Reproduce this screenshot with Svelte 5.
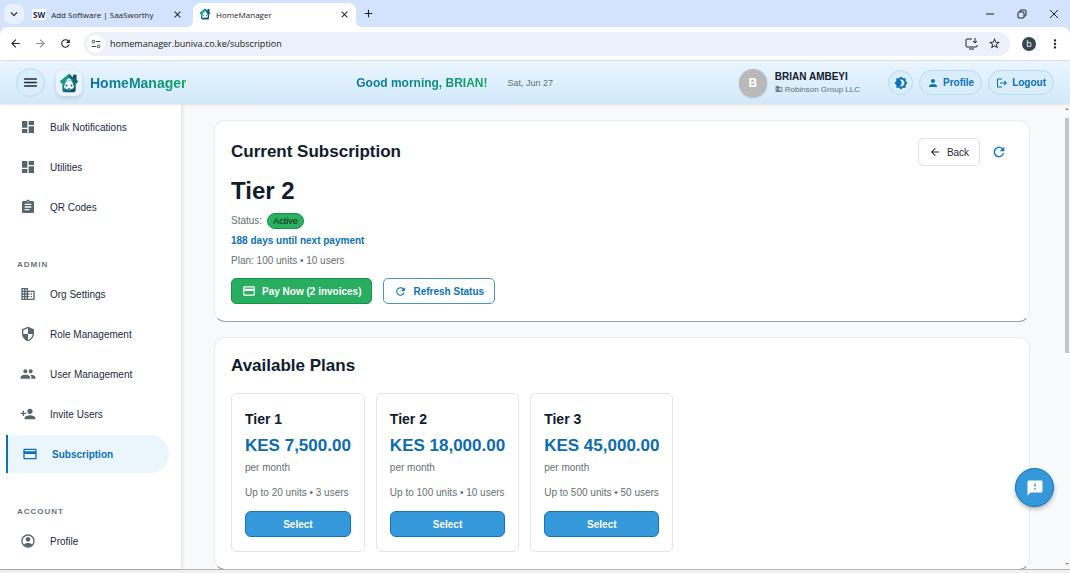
<script>
  const paths = {
    dashboard: 'M3 13h8V3H3v10zm0 8h8v-6H3v6zm10 0h8V11h-8v10zm0-18v6h8V3h-8z',
    assignment: 'M19 3h-4.18C14.4 1.84 13.3 1 12 1c-1.3 0-2.4.84-2.82 2H5c-1.1 0-2 .9-2 2v14c0 1.1.9 2 2 2h14c1.1 0 2-.9 2-2V5c0-1.1-.9-2-2-2zm-7 0c.55 0 1 .45 1 1s-.45 1-1 1-1-.45-1-1 .45-1 1-1zm2 14H7v-2h7v2zm3-4H7v-2h10v2zm0-4H7V7h10v2z',
    business: 'M12 7V3H2v18h20V7H12zM6 19H4v-2h2v2zm0-4H4v-2h2v2zm0-4H4V9h2v2zm0-4H4V5h2v2zm4 12H8v-2h2v2zm0-4H8v-2h2v2zm0-4H8V9h2v2zm0-4H8V5h2v2zm10 12h-8v-2h2v-2h-2v-2h2v-2h-2V9h8v10zm-2-8h-2v2h2v-2zm0 4h-2v2h2v-2z',
    security: 'M12 1L3 5v6c0 5.55 3.84 10.74 9 12 5.16-1.26 9-6.45 9-12V5l-9-4zm0 10.99h7c-.53 4.12-3.28 7.79-7 8.94V12H5V6.3l7-3.11v8.8z',
    people: 'M16 11c1.66 0 2.99-1.34 2.99-3S17.66 5 16 5c-1.66 0-3 1.34-3 3s1.34 3 3 3zm-8 0c1.66 0 2.99-1.34 2.99-3S9.66 5 8 5C6.34 5 5 6.34 5 8s1.34 3 3 3zm0 2c-2.33 0-7 1.17-7 3.5V19h14v-2.5c0-2.33-4.67-3.5-7-3.5zm8 0c-.29 0-.62.02-.97.05 1.16.84 1.97 1.97 1.97 3.45V19h6v-2.5c0-2.33-4.67-3.5-7-3.5z',
    personAdd: 'M15 12c2.21 0 4-1.79 4-4s-1.79-4-4-4-4 1.79-4 4 1.79 4 4 4zm-9-2V7H4v3H1v2h3v3h2v-3h3v-2H6zm9 4c-2.67 0-8 1.34-8 4v2h16v-2c0-2.66-5.33-4-8-4z',
    card: 'M20 4H4c-1.11 0-1.99.89-1.99 2L2 18c0 1.11.89 2 2 2h16c1.11 0 2-.89 2-2V6c0-1.11-.89-2-2-2zm0 14H4v-6h16v6zm0-10H4V6h16v2z',
    account: 'M12 2C6.48 2 2 6.48 2 12s4.48 10 10 10 10-4.48 10-10S17.52 2 12 2zM12 20c-4.42 0-8-3.58-8-8s3.58-8 8-8 8 3.580 8 8c0 1.950-.7 3.730-1.860 5.120C16.450 15.800 14.320 15 12 15s-4.450.8-6.140 2.120L7.350 18.500A8 8 0 0 0 12 20zM12 6c-1.930 0-3.500 1.570-3.500 3.500S10.070 13 12 13s3.500-1.570 3.500-3.500S13.930 6 12 6z',
    refresh: 'M17.65 6.35C16.2 4.9 14.21 4 12 4c-4.42 0-7.99 3.58-7.99 8s3.57 8 7.99 8c3.73 0 6.84-2.55 7.73-6h-2.08c-.82 2.33-3.04 4-5.65 4-3.31 0-6-2.69-6-6s2.69-6 6-6c1.66 0 3.14.69 4.22 1.78L13 11h7V4l-2.35 2.35z',
    feedback: 'M20 2H4c-1.1 0-1.99.9-1.99 2L2 22l4-4h14c1.1 0 2-.9 2-2V4c0-1.1-.9-2-2-2zm-7 12h-2v-2h2v2zm0-4h-2V6h2v4z',
    brightness: 'M20 8.69V4h-4.69L12 .69 8.69 4H4v4.69L.69 12 4 15.31V20h4.69L12 23.31 15.31 20H20v-4.69L23.31 12 20 8.69zM12 18c-.89 0-1.74-.2-2.5-.55C11.56 16.5 13 14.42 13 12s-1.44-4.5-3.5-5.45C10.26 6.2 11.11 6 12 6c3.31 0 6 2.69 6 6s-2.69 6-6 6z',
    person: 'M12 12c2.21 0 4-1.79 4-4s-1.79-4-4-4-4 1.79-4 4 1.79 4 4 4zm0 2c-2.67 0-8 1.34-8 4v2h16v-2c0-2.66-5.33-4-8-4z',
    logout: 'M17 7l-1.41 1.41L18.17 11H8v2h10.17l-2.58 2.58L17 17l5-5zM4 5h8V3H4c-1.1 0-2 .9-2 2v14c0 1.1.9 2 2 2h8v-2H4V5z',
    back: 'M20 11H7.83l5.59-5.59L12 4l-8 8 8 8 1.41-1.41L7.83 13H20v-2z',
    forward: 'M12 4l-1.41 1.41L16.17 11H4v2h12.17l-5.58 5.59L12 20l8-8-8-8z',
    menu: 'M3 18h18v-2H3v2zm0-5h18v-2H3v2zm0-7v2h18V6H3z',
    close: 'M19 6.41L17.59 5 12 10.59 6.41 5 5 6.41 10.59 12 5 17.59 6.41 19 12 13.41 17.59 19 19 17.59 13.41 12 19 6.41z',
    add: 'M19 13h-6v6h-2v-6H5v-2h6V5h2v6h6v2z',
    chevron: 'M7.41 8.59L12 13.17l4.59-4.58L18 10l-6 6-6-6 1.41-1.41z',
    star: 'M22 9.24l-7.19-.62L12 2 9.19 8.63 2 9.24l5.46 4.73L5.82 21 12 17.27 18.18 21l-1.63-7.03L22 9.24zM12 15.4l-3.76 2.27 1-4.28-3.32-2.88 4.38-.38L12 6.1l1.71 4.04 4.38.38-3.32 2.88 1 4.28L12 15.4z',
    more: 'M12 8c1.1 0 2-.9 2-2s-.9-2-2-2-2 .9-2 2 .9 2 2 2zm0 2c-1.1 0-2 .9-2 2s.9 2 2 2 2-.9 2-2-.9-2-2-2zm0 6c-1.1 0-2 .9-2 2s.9 2 2 2 2-.9 2-2-.9-2-2-2z',
  };

  const sections = [
    {
      title: '',
      items: [
        { label: 'Bulk Notifications', icon: 'dashboard' },
        { label: 'Utilities', icon: 'dashboard' },
        { label: 'QR Codes', icon: 'assignment' },
      ],
    },
    {
      title: 'ADMIN',
      items: [
        { label: 'Org Settings', icon: 'business' },
        { label: 'Role Management', icon: 'security' },
        { label: 'User Management', icon: 'people' },
        { label: 'Invite Users', icon: 'personAdd' },
        { label: 'Subscription', icon: 'card' },
      ],
    },
    {
      title: 'ACCOUNT',
      items: [{ label: 'Profile', icon: 'account' }],
    },
  ];

  const plans = [
    { name: 'Tier 1', price: 'KES 7,500.00', limits: 'Up to 20 units • 3 users' },
    { name: 'Tier 2', price: 'KES 18,000.00', limits: 'Up to 100 units • 10 users' },
    { name: 'Tier 3', price: 'KES 45,000.00', limits: 'Up to 500 units • 50 users' },
  ];

  let active = $state('Subscription');
  let url = $state('homemanager.buniva.co.ke/subscription');
</script>

{#snippet icon(name, size)}
  <svg width={size} height={size} viewBox="0 0 24 24" fill="currentColor" aria-hidden="true">
    <path d={paths[name]} />
  </svg>
{/snippet}

{#snippet logo(size)}
  <svg width={size} height={size} viewBox="0 0 24 24" aria-hidden="true">
    <defs>
      <linearGradient id="house" x1="0" y1="0" x2="1" y2="1">
        <stop offset="0" stop-color="#21a58c" />
        <stop offset="1" stop-color="#0c3f68" />
      </linearGradient>
    </defs>
    <path d="M17 2h4v8h-4z" fill="#0d4c66" />
    <path d="M4 9h16v11q0 3-3 3H7q-3 0-3-3z" fill="url(#house)" />
    <path d="M12 1L1 10l2 3 9-7z" fill="#159a86" />
    <path d="M12 1l11 9-2 3-9-7z" fill="#0d6e78" />
    <path d="M8 19a3 3 0 0 1-1-5 5 5 0 0 1 10 0 3 3 0 0 1-1 5q-4 2-8 0z" fill="#f0fbff" />
    <circle cx="9" cy="15" r="1.2" fill="#14647e" />
    <circle cx="15" cy="15" r="1.2" fill="#14647e" />
    <path d="M10 18h4l-2 2z" fill="#168f8c" />
  </svg>
{/snippet}

<div class="window">
  <div class="browser">
    <div class="tabs">
      <button class="tab-search" aria-label="Search tabs">{@render icon('chevron', 14)}</button>
      <div class="tab">
        <span class="favicon">SW</span>
        <span class="tab-title">Add Software | SaaSworthy</span>
        <button aria-label="Close tab">{@render icon('close', 11)}</button>
      </div>
      <div class="tab current">
        {@render logo(12)}
        <span class="tab-title">HomeManager</span>
        <button aria-label="Close tab">{@render icon('close', 11)}</button>
      </div>
      <button class="new-tab" aria-label="New tab">{@render icon('add', 13)}</button>
      <div class="window-buttons">
        <button aria-label="Minimize">
          <svg width="10" height="10" viewBox="0 0 10 10"><path d="M1 5h8" /></svg>
        </button>
        <button aria-label="Restore">
          <svg width="10" height="10" viewBox="0 0 10 10"><rect x="1" y="3" width="6" height="6" rx="1" /><path d="M3 3V2q0-1 1-1h4q1 0 1 1v4q0 1-1 1H7" /></svg>
        </button>
        <button aria-label="Close">
          <svg width="10" height="10" viewBox="0 0 10 10"><path d="M1 1l8 8M9 1L1 9" /></svg>
        </button>
      </div>
    </div>

    <div class="toolbar">
      <button aria-label="Back">{@render icon('back', 13)}</button>
      <button class="dim" aria-label="Forward">{@render icon('forward', 13)}</button>
      <button aria-label="Reload">{@render icon('refresh', 13)}</button>
      <div class="address">
        <button class="site-info" aria-label="Site information">
          <svg class="line" width="10" height="10" viewBox="0 0 12 12"><circle cx="3" cy="3" r="1.5" /><path d="M6 3h5M1 9h5" /><circle cx="9" cy="9" r="1.5" /></svg>
        </button>
        <input type="text" aria-label="Address" bind:value={url} />
        <button aria-label="Install app">
          <svg class="line" width="13" height="13" viewBox="0 0 13 13"><path d="M7 2H2q-1 0-1 1v6q0 1 1 1h9q1 0 1-1V8M4 12h5M10 1v5M8 4l2 2 2-2" /></svg>
        </button>
        <button aria-label="Bookmark">{@render icon('star', 13)}</button>
      </div>
      <button class="profile-badge" aria-label="Browser profile">b</button>
      <button aria-label="Browser menu">{@render icon('more', 14)}</button>
    </div>
  </div>

  <header>
    <button class="round" aria-label="Toggle menu">{@render icon('menu', 17)}</button>
    <span class="logo">{@render logo(20)}</span>
    <span class="brand gradient">HomeManager</span>
    <div class="greeting">
      <strong class="gradient">Good morning, BRIAN!</strong>
      <span>Sat, Jun 27</span>
    </div>
    <span class="avatar">B</span>
    <div class="user">
      <strong>BRIAN AMBEYI</strong>
      <span>{@render icon('business', 8)} Robinson Group LLC</span>
    </div>
    <button class="pill theme" aria-label="Toggle theme">{@render icon('brightness', 14)}</button>
    <button class="pill">{@render icon('person', 12)} Profile</button>
    <button class="pill">{@render icon('logout', 12)} Logout</button>
  </header>

  <div class="body">
    <nav>
      {#each sections as section}
        <div class="section">
          {#if section.title}
            <h2>{section.title}</h2>
          {/if}
          {#each section.items as item}
            <a href="#{item.icon}" class:active={active === item.label} onclick={() => (active = item.label)}>
              {@render icon(item.icon, 16)}
              {item.label}
            </a>
          {/each}
        </div>
      {/each}
    </nav>

    <main>
      <section class="card">
        <div class="card-head">
          <h1>Current Subscription</h1>
          <button class="back">{@render icon('back', 12)} Back</button>
          <button class="reload" aria-label="Refresh">{@render icon('refresh', 16)}</button>
        </div>
        <p class="tier">Tier 2</p>
        <p class="status">Status: <span class="chip">Active</span></p>
        <p class="due">188 days until next payment</p>
        <p class="limits">Plan: 100 units • 10 users</p>
        <div class="actions">
          <button class="pay">{@render icon('card', 14)} Pay Now (2 invoices)</button>
          <button class="outlined">{@render icon('refresh', 13)} Refresh Status</button>
        </div>
      </section>

      <section class="card">
        <h1>Available Plans</h1>
        <div class="plans">
          {#each plans as plan}
            <article>
              <h3>{plan.name}</h3>
              <p class="price">{plan.price}</p>
              <p>per month</p>
              <p class="plan-limits">{plan.limits}</p>
              <button class="select">Select</button>
            </article>
          {/each}
        </div>
      </section>
    </main>

    <div class="scrollbar" aria-hidden="true">
      <span class="arrow up"></span>
      <span class="thumb"></span>
      <span class="arrow down"></span>
    </div>
    <button class="feedback" aria-label="Send feedback">{@render icon('feedback', 18)}</button>
  </div>
  <div class="bottom-edge"></div>
</div>

<style>
  :global(body) {
    margin: 0;
  }

  * {
    box-sizing: border-box;
  }

  h1,
  h2,
  h3,
  p {
    margin: 0;
  }

  svg {
    display: block;
    flex-shrink: 0;
  }

  button {
    display: flex;
    align-items: center;
    justify-content: center;
    padding: 0;
    border: none;
    background: transparent;
    color: inherit;
    font: inherit;
    cursor: pointer;
  }

  .window {
    display: flex;
    flex-direction: column;
    height: 100vh;
    overflow: hidden;
    font-family: 'Liberation Sans', Arial, sans-serif;
    font-size: 10px;
    color: #1b2a3c;
    background: #f4f7fa;
  }

  /* browser frame */
  .browser {
    flex-shrink: 0;
    background: #d3e2fd;
    font-family: 'Open Sans', sans-serif;
    color: #1f2328;
  }

  .tabs {
    display: flex;
    align-items: center;
    height: 27px;
    padding-left: 4px;
    font-size: 8px;
  }

  .tab-search {
    width: 20px;
    height: 20px;
    border-radius: 7px;
    background: #e9f0fe;
  }

  .tab {
    position: relative;
    display: flex;
    align-items: center;
    gap: 5px;
    width: 163px;
    height: 24px;
    padding: 0 6px 2px;
    margin: 3px 2px 0;
  }

  .tab.current {
    border-radius: 8px 8px 0 0;
    background: #fff;
  }

  .tab.current::before,
  .tab.current::after {
    content: '';
    position: absolute;
    bottom: 0;
    width: 6px;
    height: 6px;
  }

  .tab.current::before {
    right: 100%;
    background: radial-gradient(circle at 0 0, transparent 6px, #fff 6px);
  }

  .tab.current::after {
    left: 100%;
    background: radial-gradient(circle at 100% 0, transparent 6px, #fff 6px);
  }

  .tab-title {
    flex: 1;
    white-space: nowrap;
  }

  .favicon {
    padding: 0 1px;
    background: #fff;
    font-weight: bold;
    line-height: 11px;
    color: #1b2c50;
  }

  .new-tab {
    width: 20px;
  }

  .window-buttons {
    display: flex;
    gap: 22px;
    margin-left: auto;
    padding-right: 11px;
  }

  .window-buttons svg,
  .line {
    fill: none;
    stroke: #202124;
    stroke-width: 1;
  }

  .toolbar {
    display: flex;
    align-items: center;
    gap: 12px;
    height: 34px;
    padding: 0 8px 0 9px;
    border-bottom: 1px solid #dfe3e8;
    border-radius: 8px 8px 0 0;
    background: #fff;
  }

  .dim {
    color: #8a8d91;
  }

  .address {
    display: flex;
    align-items: center;
    gap: 10px;
    flex: 1;
    height: 24px;
    padding: 0 9px 0 3px;
    border-radius: 12px;
    background: #ecf0fa;
  }

  .site-info {
    width: 18px;
    height: 18px;
    border-radius: 50%;
    background: #fff;
  }

  .address input {
    flex: 1;
    min-width: 0;
    margin-left: -5px;
    padding: 0;
    border: none;
    outline: none;
    background: transparent;
    font-family: 'Open Sans', sans-serif;
    font-size: 9px;
    color: #202124;
  }

  .profile-badge {
    width: 14px;
    height: 14px;
    border-radius: 50%;
    background: #37474f;
    color: #fff;
    font-size: 9px;
  }

  /* app header */
  header {
    position: relative;
    display: flex;
    align-items: center;
    height: 43px;
    flex-shrink: 0;
    padding: 0 16px;
    border-radius: 10px 10px 0 0;
    background: linear-gradient(#eaf5fe, #d2e9fb);
    box-shadow: 0 1px 3px rgba(0, 0, 0, 0.1);
    z-index: 1;
  }

  .round {
    width: 29px;
    height: 29px;
    border: 1px solid #b9dcf2;
    border-radius: 50%;
    background: #d9edfb;
    color: #1f2d3d;
  }

  .logo {
    display: flex;
    align-items: center;
    justify-content: center;
    width: 26px;
    height: 26px;
    margin: 0 8px 0 11px;
    border-radius: 7px;
    background: #e9f4fc;
    box-shadow: 0 2px 4px rgba(0, 60, 100, 0.15);
  }

  .gradient {
    background: linear-gradient(90deg, #0a70b0, #0ba65d);
    background-clip: text;
    color: transparent;
  }

  .brand {
    font-size: 14px;
    font-weight: bold;
  }

  .greeting {
    display: flex;
    align-items: center;
    justify-content: center;
    gap: 20px;
    flex: 1;
    padding-right: 16px;
    font-size: 9px;
    color: #5f6f72;
  }

  .greeting strong {
    font-size: 12px;
  }

  .avatar {
    display: flex;
    align-items: center;
    justify-content: center;
    width: 28px;
    height: 28px;
    border-radius: 50%;
    background: #b9b9b9;
    color: #fff;
    font-size: 12px;
    font-weight: bold;
    box-shadow: 0 1px 2px rgba(0, 0, 0, 0.2);
  }

  .user {
    display: flex;
    flex-direction: column;
    gap: 2px;
    margin: 0 28px 0 8px;
    font-size: 8px;
    line-height: 11px;
    color: #5f6f72;
  }

  .user strong {
    font-size: 10px;
    color: #14202e;
  }

  .user span {
    display: flex;
    align-items: center;
    gap: 2px;
  }

  .pill {
    gap: 4px;
    height: 25px;
    margin-left: 6px;
    padding: 0 7px;
    border: 1px solid #b5daf2;
    border-radius: 13px;
    background: #d9edfb;
    color: #0b72b5;
    font-weight: bold;
  }

  .theme {
    width: 25px;
    margin-left: 0;
    padding: 0;
  }

  /* sidebar */
  .body {
    position: relative;
    display: flex;
    flex: 1;
    min-height: 0;
    background: #f7f9fb;
  }

  nav {
    width: 181px;
    flex-shrink: 0;
    padding: 4px 12px 0 6px;
    overflow: hidden;
    background: #fff;
    box-shadow: 1px 0 4px rgba(0, 0, 0, 0.12);
  }

  .section {
    display: flex;
    flex-direction: column;
    gap: 2px;
    margin-bottom: 33px;
  }

  .section h2 {
    padding: 0 11px;
    margin-bottom: 2px;
    font-size: 8px;
    line-height: 12px;
    letter-spacing: 1px;
    color: #66767a;
  }

  nav a {
    display: flex;
    align-items: center;
    gap: 14px;
    height: 38px;
    padding-left: 14px;
    font-size: 10px;
    color: #1b2a3c;
    text-decoration: none;
  }

  nav a svg {
    color: #56666a;
  }

  nav a.active {
    border-left: 2px solid #0b72b5;
    border-radius: 0 19px 19px 0;
    background: #ebf5fc;
    color: #0b72b5;
    font-weight: bold;
  }

  nav a.active svg {
    color: #0b72b5;
  }

  /* page */
  main {
    display: flex;
    flex-direction: column;
    gap: 15px;
    flex: 1;
    min-width: 0;
    padding: 16px 34px 0 33px;
    overflow: hidden;
  }

  .card {
    flex-shrink: 0;
    padding: 17px 11px 17px 16px;
    border: 1px solid #e9ecef;
    border-bottom-color: #9ba3a3;
    border-radius: 11px;
    background: #fff;
  }

  h1 {
    font-size: 17px;
    line-height: 22px;
    color: #0f1c2e;
  }

  .card-head {
    display: flex;
    align-items: center;
  }

  .card-head h1 {
    flex: 1;
  }

  .back {
    gap: 6px;
    width: 62px;
    height: 28px;
    border: 1px solid #dfe3e6;
    border-radius: 5px;
  }

  .reload {
    width: 38px;
    height: 28px;
    color: #0b72b5;
  }

  .card p {
    font-size: 10px;
    line-height: 20px;
    color: #66706f;
  }

  .card .tier {
    margin: 10px 0 5px;
    font-size: 24px;
    font-weight: bold;
    line-height: 30px;
    color: #0f1c2e;
  }

  .status {
    display: flex;
    align-items: center;
    gap: 5px;
  }

  .chip {
    padding: 0 5px;
    border: 1px solid #159347;
    border-radius: 8px;
    background: #2bb062;
    font-size: 9px;
    line-height: 14px;
    color: #06210f;
  }

  .card .due {
    font-weight: bold;
    color: #0b72b5;
  }

  .actions {
    display: flex;
    gap: 11px;
    margin-top: 7px;
  }

  .actions button {
    gap: 6px;
    height: 26px;
    padding: 0 10px;
    border: 1px solid #159347;
    border-radius: 5px;
    background: #27ae60;
    color: #fff;
    font-weight: bold;
  }

  .actions .outlined {
    border-color: #4796cc;
    background: #fff;
    color: #0b72b5;
  }

  .plans {
    display: flex;
    gap: 11px;
    margin-top: 16px;
  }

  article {
    padding: 14px 13px;
    border: 1px solid #e1e5e7;
    border-radius: 6px;
  }

  h3 {
    margin-bottom: 6px;
    font-size: 14px;
    line-height: 22px;
    color: #0f1c2e;
  }

  .card .price {
    margin-bottom: 2px;
    font-size: 17px;
    font-weight: bold;
    color: #0b6cb0;
  }

  .card .plan-limits {
    margin: 5px 0 8px;
  }

  .select {
    width: 100%;
    height: 26px;
    border: 1px solid #1276b8;
    border-radius: 6px;
    background: #3498db;
    color: #fff;
    font-weight: bold;
  }

  .scrollbar {
    display: flex;
    flex-direction: column;
    align-items: center;
    width: 6px;
    padding: 2px 0;
    background: #fafafa;
  }

  .arrow {
    border: 2px solid transparent;
  }

  .up {
    border-bottom-color: #8f8f8f;
  }

  .down {
    margin-top: auto;
    border-top-color: #8f8f8f;
  }

  .thumb {
    width: 4px;
    height: 51%;
    margin-top: 8px;
    background: #c4c4c4;
  }

  .feedback {
    position: absolute;
    right: 16px;
    bottom: 62px;
    width: 39px;
    height: 39px;
    border: 1px solid #1276b8;
    border-radius: 50%;
    background: #3498db;
    color: #fff;
    box-shadow: 0 2px 4px rgba(0, 0, 0, 0.3);
  }

  .bottom-edge {
    height: 4px;
    flex-shrink: 0;
    border-top: 1px solid #b4b4b4;
    background: #f1f1f1;
  }
</style>
